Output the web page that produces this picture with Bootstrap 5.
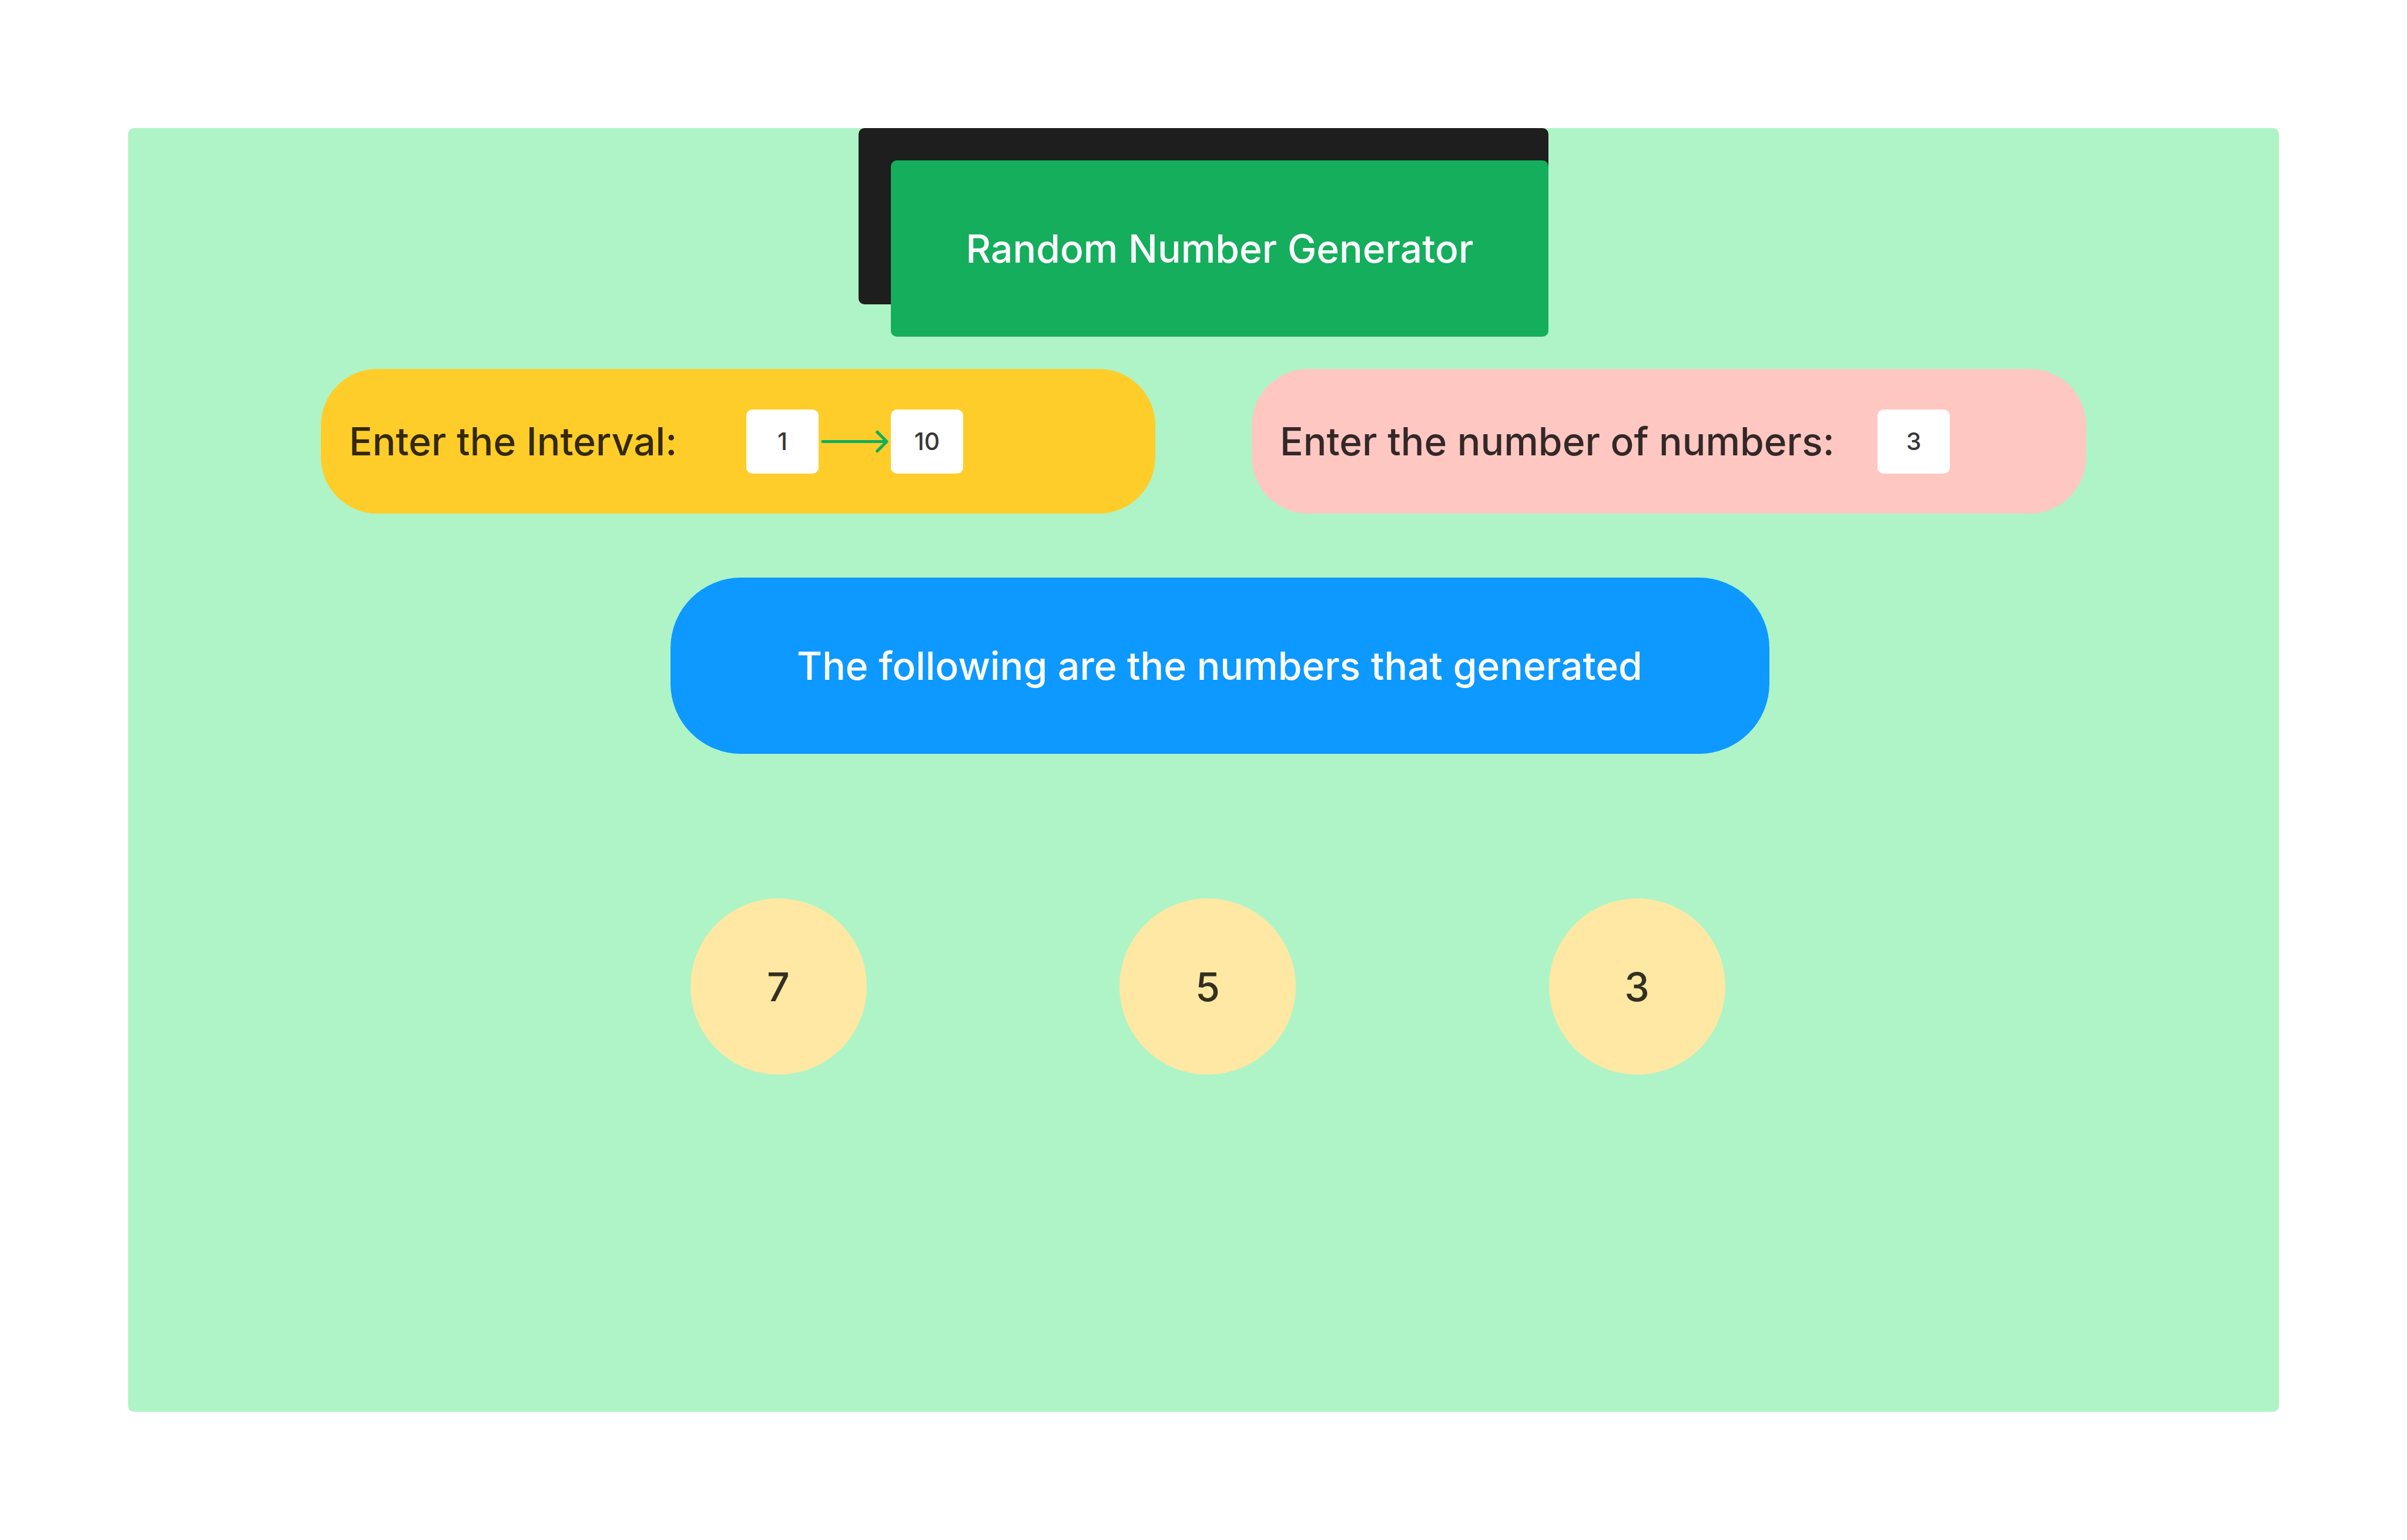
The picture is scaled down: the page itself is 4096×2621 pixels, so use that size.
<!DOCTYPE html>
<html lang="en">
<head>
<meta charset="utf-8">
<meta name="viewport" content="width=device-width, initial-scale=1">
<title>Random Number Generator</title>
<link href="https://cdn.jsdelivr.net/npm/bootstrap@5.3.0/dist/css/bootstrap.min.css" rel="stylesheet">
<style>
  body { font-family: Inter, "Liberation Sans", sans-serif; font-weight: 500; font-size: 66px; line-height: 82px; color: rgba(0,0,0,.8); background: #fff; }
  .page { min-height: 100vh; padding: 218px; }
  .board { background: #aff4c6; border-radius: 10px; }
  .banner { display: grid; width: 1174px; max-width: 100%; margin-bottom: 55px; }
  .banner > * { grid-area: 1 / 1; min-height: 300px; border-radius: 10px; }
  .banner-shade { background: #1e1e1e; margin-bottom: 55px; }
  .banner-title { background: #14ae5c; margin: 55px 0 0 55px; font-size: inherit; font-weight: inherit; line-height: inherit; }
  .settings { gap: 164px; margin-bottom: 109px; }
  .pill { width: 1420px; max-width: 100%; min-height: 246px; padding: 0 48px; border-radius: 96px; }
  .pill-interval { background: #ffcd29; }
  .pill-count { background: #ffc7c2; }
  .pill-interval label { min-width: 676px; }
  .pill-count label { min-width: 1017px; }
  .num-box { width: 123px; height: 109px; padding: 0; border: 0; border-radius: 10px; font-size: 41px; font-weight: 500; text-align: center; color: rgba(0,0,0,.8); background: #fff; }
  .arrow { width: 123px; height: 109px; }
  .results { width: 1870px; max-width: 100%; margin-left: 55px; }
  .results-title { background: #0d99ff; min-height: 300px; border-radius: 120px; margin-bottom: 246px; font-size: inherit; font-weight: inherit; line-height: inherit; }
  .balls { padding: 0 75px 0 34px; font-size: 68px; }
  .ball { width: 300px; height: 300px; background: #ffe8a3; }
</style>
</head>
<body>
<div class="page d-flex">
  <main class="board flex-grow-1 d-flex flex-column align-items-center">
    <header class="banner">
      <div class="banner-shade"></div>
      <h1 class="banner-title d-flex align-items-center justify-content-center text-white">Random Number Generator</h1>
    </header>
    <form class="settings d-flex flex-wrap justify-content-center">
      <div class="pill pill-interval d-flex align-items-center">
        <label for="from">Enter the Interval:</label>
        <input class="num-box" id="from" type="text" inputmode="numeric" value="1">
        <svg class="arrow" viewBox="0 0 144 128" fill="none" stroke="#14ae5c" stroke-width="6" stroke-linecap="round" stroke-linejoin="round" aria-hidden="true"><path d="M8 64H135M117 45L136 64L117 83"/></svg>
        <input class="num-box" id="to" type="text" inputmode="numeric" value="10" aria-label="Interval end">
      </div>
      <div class="pill pill-count d-flex align-items-center">
        <label for="count">Enter the number of numbers:</label>
        <input class="num-box" id="count" type="text" inputmode="numeric" value="3">
      </div>
    </form>
    <section class="results">
      <h2 class="results-title d-flex align-items-center justify-content-center text-white">The following are the numbers that generated</h2>
      <div class="balls d-flex justify-content-between">
        <div class="ball rounded-circle d-flex align-items-center justify-content-center">7</div>
        <div class="ball rounded-circle d-flex align-items-center justify-content-center">5</div>
        <div class="ball rounded-circle d-flex align-items-center justify-content-center">3</div>
      </div>
    </section>
  </main>
</div>
<script src="https://cdn.jsdelivr.net/npm/bootstrap@5.3.0/dist/js/bootstrap.bundle.min.js"></script>
</body>
</html>
